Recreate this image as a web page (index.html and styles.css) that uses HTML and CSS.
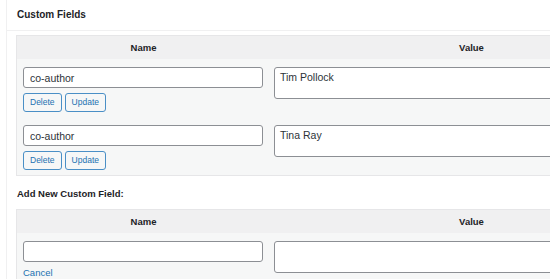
FILE: index.html
```html
<!DOCTYPE html>
<html lang="en">
<head>
    <meta charset="UTF-8">
    <meta name="viewport" content="width=device-width, initial-scale=1.0">
    <title>Custom Fields</title>
    <link rel="stylesheet" href="styles.css">
</head>
<body>
    <div class="postbox">
        <div class="postbox-header">
            <h2>Custom Fields</h2>
        </div>
        <div class="inside">
            <table class="list-table">
                <thead>
                    <tr>
                        <th class="col-name">Name</th>
                        <th class="col-value">Value</th>
                    </tr>
                </thead>
                <tbody>
                    <tr>
                        <td class="cell-name">
                            <input type="text" class="field-input" value="co-author">
                            <div class="actions">
                                <button class="btn">Delete</button>
                                <button class="btn">Update</button>
                            </div>
                        </td>
                        <td class="cell-value">
                            <textarea class="field-area">Tim Pollock</textarea>
                        </td>
                    </tr>
                    <tr>
                        <td class="cell-name">
                            <input type="text" class="field-input" value="co-author">
                            <div class="actions">
                                <button class="btn">Delete</button>
                                <button class="btn">Update</button>
                            </div>
                        </td>
                        <td class="cell-value">
                            <textarea class="field-area">Tina Ray</textarea>
                        </td>
                    </tr>
                </tbody>
            </table>

            <p class="add-title">Add New Custom Field:</p>

            <table class="list-table">
                <thead>
                    <tr>
                        <th class="col-name">Name</th>
                        <th class="col-value">Value</th>
                    </tr>
                </thead>
                <tbody>
                    <tr>
                        <td class="cell-name">
                            <input type="text" class="field-input" value="">
                            <a href="#" class="cancel-link">Cancel</a>
                        </td>
                        <td class="cell-value">
                            <textarea class="field-area"></textarea>
                        </td>
                    </tr>
                </tbody>
            </table>
        </div>
    </div>
</body>
</html>
```

FILE: styles.css
```css
* {
    box-sizing: border-box;
    font-family: 'Liberation Sans', Arial, sans-serif;
}

body {
    margin: 0;
    background-color: #fff;
    overflow: hidden;
}

/* the box is wider than the window, so clip it here */
.postbox {
    margin-left: 6px;
    border-left: 1px solid #f0f0f1;
    min-height: 279px;
    overflow: hidden;
}

.postbox-header {
    height: 31px;
    border-bottom: 1px solid #f0f0f1;
}

.postbox-header h2 {
    margin: 0;
    padding-left: 10px;
    font-size: 10px;
    line-height: 30px;
    font-weight: bold;
    color: #1d2327;
}

.inside {
    width: 680px;
    padding: 4px 0 0 9px;
}

.list-table {
    width: 658px;
    border: 1px solid #e6e6e8;
    border-spacing: 0;
    border-collapse: separate;
}

.list-table th {
    height: 23px;
    padding: 0;
    background-color: #f0f0f1;
    font-size: 9.5px;
    font-weight: bold;
    color: #1d2327;
    text-align: center;
}

.col-name {
    width: 253px;
}

.list-table td {
    background-color: #f6f7f7;
    vertical-align: top;
}

.cell-name {
    padding: 8px 6px 5px 6px;
}

.cell-value {
    padding: 8px 0 5px 4px;
}

.field-input {
    display: block;
    width: 240px;
    height: 21px;
    margin: 0;
    padding: 0 6px;
    border: 1px solid #8c8f94;
    border-radius: 3px;
    background-color: #fff;
    font-size: 10.5px;
    color: #2c3338;
}

.field-area {
    display: block;
    width: 390px;
    height: 32px;
    margin: 0;
    padding: 3px 5px;
    border: 1px solid #8c8f94;
    border-radius: 3px;
    background-color: #fff;
    font-size: 10.5px;
    color: #2c3338;
    resize: none;
}

.actions {
    display: flex;
    gap: 3px;
    margin-top: 5px;
}

.btn {
    height: 19px;
    padding: 0 6px;
    border: 1px solid #4a8fc6;
    border-radius: 3px;
    background-color: #f6f7f7;
    color: #2271b1;
    font-size: 8.5px;
    line-height: 17px;
    cursor: pointer;
}

.add-title {
    margin: 11px 0 8px 1px;
    font-size: 9.5px;
    line-height: 14px;
    font-weight: bold;
    color: #1d2327;
}

.cancel-link {
    display: inline-block;
    margin-top: 4px;
    font-size: 9.5px;
    line-height: 12px;
    color: #2271b1;
    text-decoration: none;
}
```
